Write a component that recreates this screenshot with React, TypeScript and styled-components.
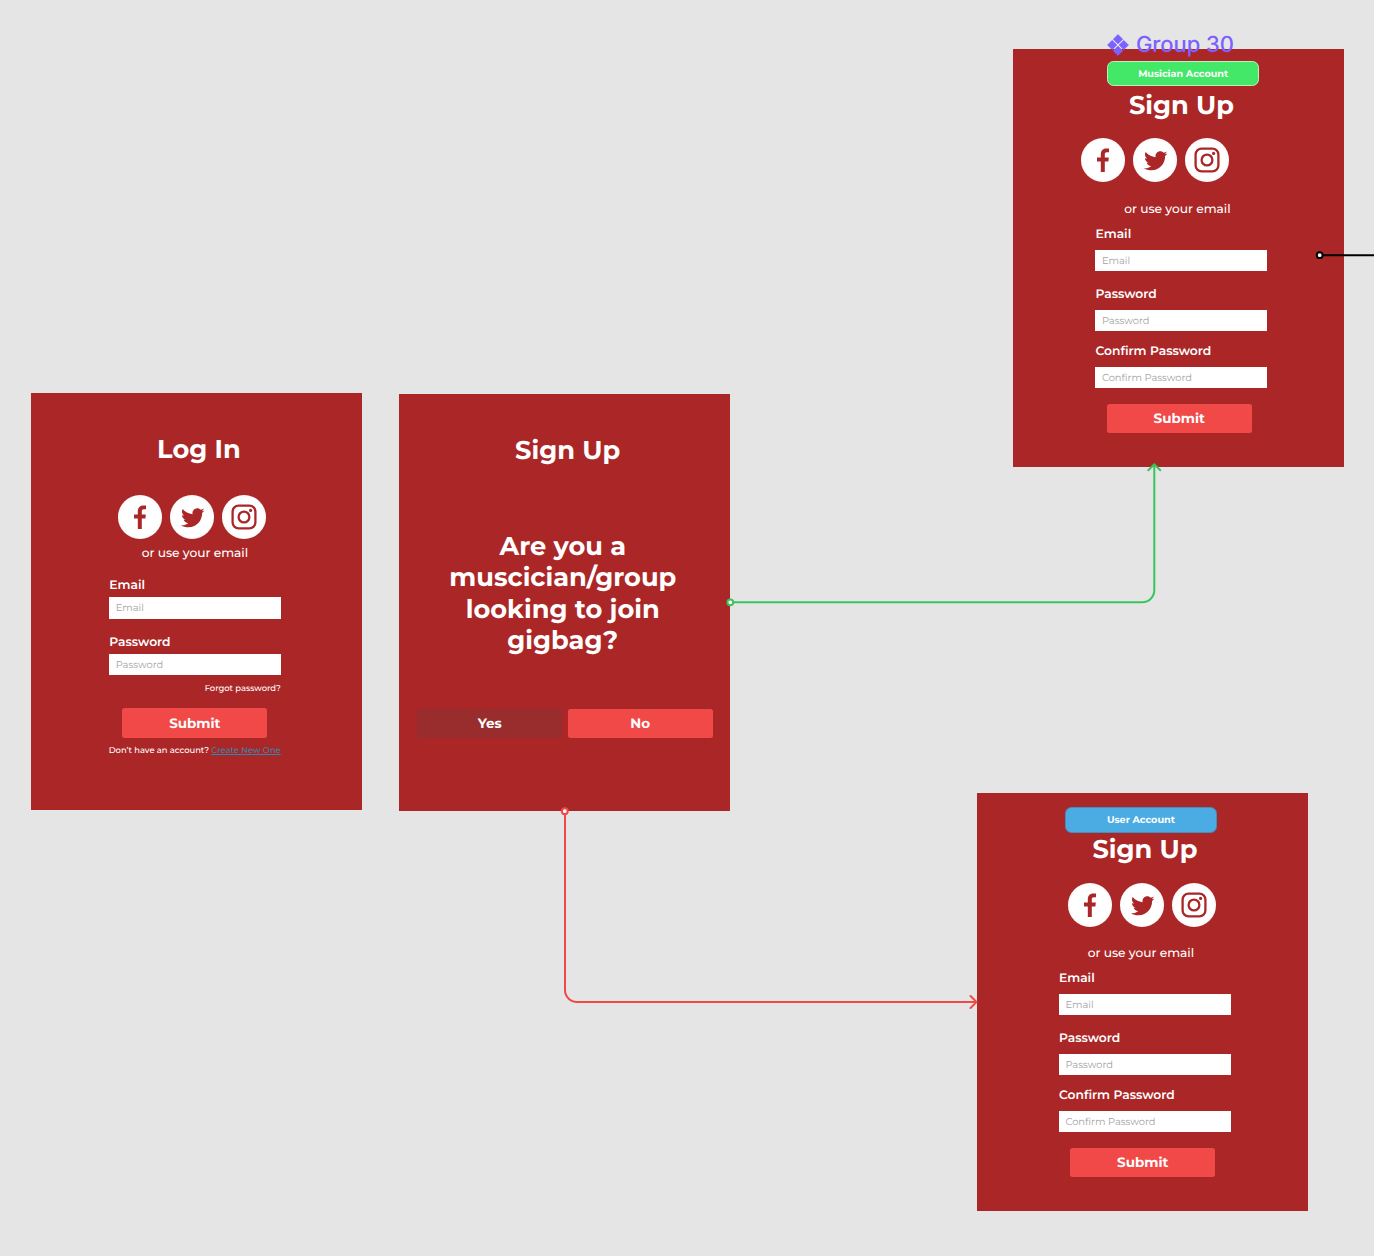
import React from "react";
import styled, { createGlobalStyle } from "styled-components";
import { FaTwitter } from "react-icons/fa";

const RED = "#ab2727";

const GlobalStyle = createGlobalStyle`
  * { box-sizing: border-box; }
  body {
    margin: 0;
    background: #e5e5e5;
    font-family: Montserrat, Inter, sans-serif;
    text-rendering: geometricPrecision;
  }
`;

const Canvas = styled.main`
  position: relative;
  width: 1374px;
  height: 1256px;
  overflow: hidden;
  background: #e5e5e5;
  color: #fff;
`;

const Artboard = styled.section<{ $x: number; $y: number }>`
  position: absolute;
  left: ${(p) => p.$x}px;
  top: ${(p) => p.$y}px;
  width: 331px;
  height: 417.3px;
  display: flex;
  flex-direction: column;
  align-items: flex-start;
  background: ${RED};
`;

const Title = styled.h1<{ $gap: number }>`
  align-self: stretch;
  margin: ${(p) => p.$gap}px 0 0;
  padding-left: 5.5px;
  text-align: center;
  font-size: 25.7px;
  font-weight: 700;
  line-height: 31.4px;
`;

const Question = styled.p`
  width: 260px;
  margin: 64.8px 0 0 33.4px;
  text-align: center;
  font-size: 25.7px;
  font-weight: 700;
  line-height: 31.35px;
`;

const Badge = styled.div<{ $tone: "musician" | "user"; $left: number; $gap: number }>`
  width: 152.6px;
  height: 25.4px;
  margin: ${(p) => p.$gap}px 0 0 ${(p) => p.$left}px;
  padding-top: 3px;
  display: flex;
  align-items: center;
  justify-content: center;
  border: 1px solid ${(p) => (p.$tone === "musician" ? "#b5f2c0" : "#3e8fc4")};
  border-radius: 6.5px;
  background: ${(p) => (p.$tone === "musician" ? "#44e868" : "#4aace3")};
  font-size: 9.65px;
  font-weight: 700;
  line-height: 12px;
`;

const Socials = styled.div<{ $left: number; $gap: number }>`
  display: flex;
  gap: 8.3px;
  margin: ${(p) => p.$gap}px 0 0 ${(p) => p.$left}px;
`;

const Social = styled.a`
  width: 43.7px;
  height: 43.7px;
  display: flex;
  align-items: center;
  justify-content: center;
  border-radius: 50%;
  background: #fff;
  color: ${RED};
  box-shadow: inset 0 0 4px rgba(0, 0, 0, 0.06);
`;

const Bird = styled(FaTwitter)`
  margin: 2px 0 0 2px;
`;

const Hint = styled.p<{ $gap: number }>`
  align-self: stretch;
  margin: ${(p) => p.$gap}px 0 0;
  padding-right: 2.6px;
  text-align: center;
  font-size: 12.2px;
  font-weight: 500;
  line-height: 15px;
`;

const Form = styled.div<{ $left: number; $gap: number }>`
  width: 172px;
  margin: ${(p) => p.$gap}px 0 0 ${(p) => p.$left}px;
  display: flex;
  flex-direction: column;
`;

const Field = styled.label<{ $before?: number; $inner: number }>`
  display: flex;
  flex-direction: column;
  gap: ${(p) => p.$inner}px;
  margin-top: ${(p) => p.$before ?? 0}px;
  font-size: 12.3px;
  font-weight: 600;
  line-height: 15px;
`;

const Caption = styled.span`
  padding-left: 0.4px;
`;

const Input = styled.span`
  height: 21.2px;
  padding-left: 6.8px;
  background: #fff;
  color: #a3a3a3;
  font-size: 9.9px;
  font-weight: 400;
  line-height: 23.2px;
`;

const Forgot = styled.span`
  margin-top: 9px;
  text-align: right;
  font-size: 8.4px;
  font-weight: 500;
  line-height: 10px;
`;

const Button = styled.span<{ $dark?: boolean }>`
  width: 145.2px;
  height: 29.2px;
  padding-top: 3px;
  display: flex;
  align-items: center;
  justify-content: center;
  border-radius: 2.5px;
  background: ${(p) => (p.$dark ? "#992d2e" : "#f14848")};
  font-size: 13.5px;
  font-weight: 700;
  line-height: 17px;
`;

const Actions = styled.div<{ $left: number; $gap: number }>`
  display: flex;
  gap: 5.2px;
  margin: ${(p) => p.$gap}px 0 0 ${(p) => p.$left}px;
`;

const Footnote = styled.p`
  margin: 8px 0 0 78px;
  white-space: nowrap;
  font-size: 8.4px;
  font-weight: 500;
  line-height: 10px;
`;

const Link = styled.a`
  color: #3585ab;
  text-decoration: underline;
`;

const Connectors = styled.svg`
  position: absolute;
  inset: 0;
  fill: none;
  stroke-width: 2;
  stroke-linecap: round;
`;

const LayerTag = styled.div`
  position: absolute;
  left: 1107.3px;
  top: 31px;
  display: flex;
  align-items: center;
  gap: 6.7px;
  color: #7b61ff;
  font-family: Inter, sans-serif;
  font-size: 22px;
  font-weight: 450;
  letter-spacing: -0.08px;
  line-height: 27px;
`;

const TagName = styled.span`
  padding-top: 1px;
`;

const FacebookGlyph = () => (
  <svg width="12" height="24" viewBox="0 0 12 24" fill="currentColor">
    <path d="M3.8 24V13.5H0V9.6H3.8V6.3C3.8 2.6 5.8 0.4 9.2 0.4H12V4.3H10C8.4 4.3 7.8 5.1 7.8 6.5V9.6H11.8L11.4 13.5H7.8V24Z" />
  </svg>
);

const InstagramGlyph = () => (
  <svg width="26" height="26" viewBox="0 0 26 26" fill="none" stroke="currentColor" strokeWidth="2.3">
    <rect x="1.6" y="1.6" width="22.8" height="22.8" rx="6" />
    <circle cx="13" cy="13" r="5.4" />
    <circle cx="19.6" cy="6.4" r="1.6" fill="currentColor" stroke="none" />
  </svg>
);

const SocialRow = ({ left, gap }: { left: number; gap: number }) => (
  <Socials $left={left} $gap={gap}>
    <Social><FacebookGlyph /></Social>
    <Social><Bird size={23.5} /></Social>
    <Social><InstagramGlyph /></Social>
  </Socials>
);

const LabeledField = ({ name, inner, before }: { name: string; inner: number; before?: number }) => (
  <Field $inner={inner} $before={before}>
    <Caption>{name}</Caption>
    <Input>{name}</Input>
  </Field>
);

interface SignUpProps {
  x: number;
  y: number;
  tone: "musician" | "user";
  badge: string;
  badgeLeft: number;
  badgeGap: number;
  titleGap: number;
  socialLeft: number;
  socialGap: number;
  hintGap: number;
}

const SignUpBoard = (p: SignUpProps) => (
  <Artboard $x={p.x} $y={p.y}>
    <Badge $tone={p.tone} $left={p.badgeLeft} $gap={p.badgeGap}>{p.badge}</Badge>
    <Title $gap={p.titleGap}>Sign Up</Title>
    <SocialRow left={p.socialLeft} gap={p.socialGap} />
    <Hint $gap={p.hintGap}>or use your email</Hint>
    <Form $left={81.9} $gap={9.8}>
      <LabeledField name="Email" inner={7.9} />
      <LabeledField name="Password" inner={7.9} before={16.1} />
      <LabeledField name="Confirm Password" inner={7.9} before={13.2} />
    </Form>
    <Actions $left={93.4} $gap={15.3}><Button>Submit</Button></Actions>
  </Artboard>
);

export default function App() {
  return (
    <Canvas>
      <GlobalStyle />

      <Artboard $x={30.7} $y={393}>
        <Title $gap={41.1}>Log In</Title>
        <SocialRow left={87.7} gap={29.5} />
        <Hint $gap={7.1}>or use your email</Hint>
        <Form $left={78.2} $gap={16.9}>
          <LabeledField name="Email" inner={4.8} />
          <LabeledField name="Password" inner={4.5} before={16} />
          <Forgot>Forgot password?</Forgot>
        </Form>
        <Actions $left={91.5} $gap={14.1}><Button>Submit</Button></Actions>
        <Footnote>Don’t have an account? <Link>Create New One</Link></Footnote>
      </Artboard>

      <Artboard $x={399.4} $y={393.6}>
        <Title $gap={41.2}>Sign Up</Title>
        <Question>Are you a muscician/group looking to join gigbag?</Question>
        <Actions $left={17.8} $gap={52.4}>
          <Button $dark>Yes</Button>
          <Button>No</Button>
        </Actions>
      </Artboard>

      <SignUpBoard x={1013.2} y={49.3} tone="musician" badge="Musician Account" badgeLeft={93.7} badgeGap={11.7}
        titleGap={4.1} socialLeft={67.8} socialGap={16.4} hintGap={20.2} />
      <SignUpBoard x={976.7} y={793.3} tone="user" badge="User Account" badgeLeft={87.9} badgeGap={14}
        titleGap={1.8} socialLeft={91.5} socialGap={17.4} hintGap={19.1} />

      <Connectors width="1374" height="1256" viewBox="0 0 1374 1256">
        <g stroke="#39c45c">
          <path d="M730.3 602.3H1142.3A12 12 0 0 0 1154.3 590.3V464.3M1148.3 470.3L1154.3 464.3L1160.3 470.3" />
          <circle cx="730.3" cy="602.3" r="2.9" fill="#fff" />
        </g>
        <g stroke="#f14848">
          <path d="M565 811V990A12 12 0 0 0 577 1002H976.5M970.5 996L976.5 1002L970.5 1008" />
          <circle cx="564.8" cy="811.2" r="2.9" fill="#fff" />
        </g>
        <g stroke="#000">
          <path d="M1319.7 255.2H1376" />
          <circle cx="1319.7" cy="255.2" r="2.9" fill="#fff" />
        </g>
      </Connectors>

      <LayerTag>
        <svg width="22" height="22" viewBox="0 0 22 22" fill="currentColor" stroke="currentColor" strokeWidth="0.8" strokeLinejoin="round">
          <path d="M11 0.6L15.6 5.2L11 9.8L6.4 5.2ZM11 12.2L15.6 16.8L11 21.4L6.4 16.8ZM5.2 6.4L9.8 11L5.2 15.6L0.6 11ZM16.8 6.4L21.4 11L16.8 15.6L12.2 11Z" />
        </svg>
        <TagName>Group 30</TagName>
      </LayerTag>
    </Canvas>
  );
}
